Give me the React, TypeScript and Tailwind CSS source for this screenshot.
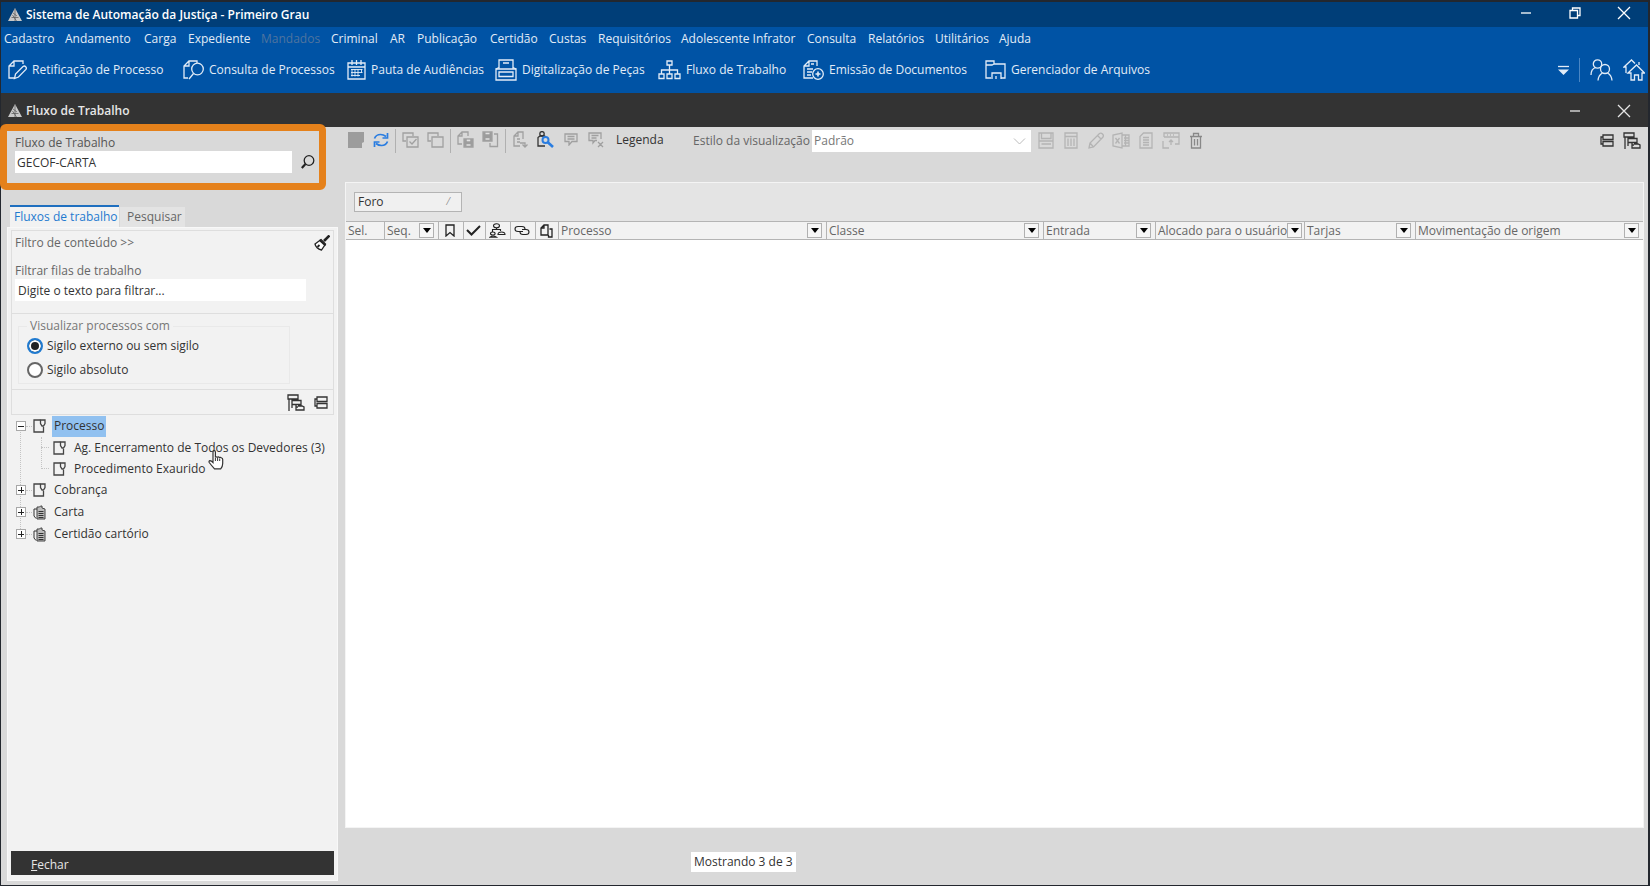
import React from 'react';

// ==========================================
// --- DATA ---
// ==========================================
const menuItems = [
    "Cadastro", "Andamento", "Carga", "Expediente", "Mandados", "Criminal", "AR", "Publicação", "Certidão",
    "Custas", "Requisitórios", "Adolescente Infrator", "Consulta", "Relatórios", "Utilitários", "Ajuda"
];

const shortcuts = [
    { icon: "edit", label: "Retificação de Processo" },
    { icon: "search", label: "Consulta de Processos" },
    { icon: "calendar", label: "Pauta de Audiências" },
    { icon: "scanner", label: "Digitalização de Peças" },
    { icon: "flow", label: "Fluxo de Trabalho" },
    { icon: "emit", label: "Emissão de Documentos" },
    { icon: "files", label: "Gerenciador de Arquivos" }
];

const toolGroups = [
    [{ icon: "sheet", label: "Novo" }, { icon: "refresh", label: "Atualizar" }],
    [{ icon: "selectAll", label: "Selecionar todos" }, { icon: "selectNone", label: "Desmarcar todos" }],
    [{ icon: "docSave", label: "Salvar documento" }, { icon: "saveDoc", label: "Exportar documento" }],
    [
        { icon: "docMove", label: "Movimentar" },
        { icon: "lookup", label: "Localizar" },
        { icon: "note", label: "Observação" },
        { icon: "noteDelete", label: "Remover observação" }
    ]
];

const styleTools = [
    { icon: "floppy", label: "Salvar estilo" },
    { icon: "bin", label: "Excluir estilo" },
    { icon: "pencil", label: "Editar estilo" },
    { icon: "excel", label: "Exportar planilha" },
    { icon: "report", label: "Relatório" },
    { icon: "columns", label: "Colunas" },
    { icon: "trash", label: "Limpar" }
];

const columns = [
    { label: "Sel.", width: "w-[38px]" },
    { label: "Seq.", width: "w-[54px]", filter: true },
    { icon: "bookmark", label: "Marcador", width: "w-[25px]" },
    { icon: "check", label: "Concluído", width: "w-[22px]" },
    { icon: "people", label: "Partes", width: "w-[25px]" },
    { icon: "link", label: "Vínculos", width: "w-[25px]" },
    { icon: "pages", label: "Documentos", width: "w-[23px]" },
    { label: "Processo", width: "w-[268px]", filter: true },
    { label: "Classe", width: "w-[217px]", filter: true },
    { label: "Entrada", width: "w-[112px]", filter: true },
    { label: "Alocado para o usuário", width: "w-[149px]", filter: true },
    { label: "Tarjas", width: "w-[111px]", filter: true },
    { label: "Movimentação de origem", width: "", filter: true }
];

const tree = [
    {
        label: "Processo", icon: "folder", open: true, selected: true,
        children: ["Ag. Encerramento de Todos os Devedores (3)", "Procedimento Exaurido"]
    },
    { label: "Cobrança", icon: "folder" },
    { label: "Carta", icon: "stack" },
    { label: "Certidão cartório", icon: "stack" }
];

// ==========================================
// --- ICONS ---
// ==========================================
function Svg({ w, h, children, className = "" }: any) {
    return (
        <svg
            width={w}
            height={h}
            viewBox={`0 0 ${w} ${h}`}
            fill="none"
            stroke="currentColor"
            strokeWidth={1.3}
            aria-hidden="true"
            className={`shrink-0 ${className}`}
        >
            {children}
        </svg>
    );
}

function Icon({ name }: { name: string }) {
    switch (name) {
        case "logo":
            return (
                <Svg w={14} h={14}>
                    <path d="M7 0L14 13H0z" fill="#c8c8c8" stroke="none" />
                    <path d="M7 1v12M5 5l4 3M3.500 9.500h7M4.500 7l4 6" stroke="#555" strokeWidth={0.7} />
                </Svg>
            );
        case "edit":
            return (
                <Svg w={19} h={20}>
                    <path d="M15 4V1H6L1 6v12h5M1 6h5V1" />
                    <path d="M6.500 18.500l1-4.500L15 6.500q1.500-1 2.700.2t.2 2.700L10.500 17z" />
                </Svg>
            );
        case "search":
            return (
                <Svg w={21} h={20}>
                    <path d="M10 1H6L1 6v12h4M1 6h5V1M10 1h4v2" />
                    <circle cx="14.500" cy="9" r="5.800" />
                    <path d="M10.500 13.500L6 19" />
                </Svg>
            );
        case "calendar":
            return (
                <Svg w={19} h={20}>
                    <path d="M1 3h17v16H1zM1 7h17M5 0v5M9.500 0v5M14 0v5" />
                    <path d="M4 9.500h11.500M4 12.500h11.500M4 15.500h9M5 9v7.500M8 9v7.500M11 9v7.500M14.500 9v4" strokeWidth={0.9} />
                </Svg>
            );
        case "scanner":
            return (
                <Svg w={22} h={22}>
                    <path d="M4 10V1h14v9M1 10h20v11H1zM8 4h6" />
                    <path d="M1 10l3-1.500M21 10l-3-1.500M4 13v4.500h14V13z" />
                </Svg>
            );
        case "flow":
            return (
                <Svg w={23} h={20}>
                    <path d="M9 1h5v4H9zM11.500 5v9M3.500 14v-4h16v4M1 14h5v4.500H1zM9 14h5v4.500H9zM17 14h5v4.500h-5z" />
                </Svg>
            );
        case "emit":
            return (
                <Svg w={21} h={20}>
                    <path d="M14 6V1H6L1 6v12h9M1 6h5V1M4 9h6M4 12h5M4 15h4M8 4h3" />
                    <circle cx="15" cy="14" r="5.300" />
                    <path d="M15 11.500v5M12.500 14h5" strokeWidth={1.600} />
                </Svg>
            );
        case "files":
            return (
                <Svg w={21} h={20}>
                    <path d="M6 18H1V1h8v3h11v14h-4M1 5h6l2-1M7 19v-6h9v6M11 19v-3" />
                </Svg>
            );
        case "users":
            return (
                <Svg w={23} h={22}>
                    <circle cx="7.500" cy="5" r="4.200" />
                    <path d="M1 16q0-6 4.500-7.500" />
                    <circle cx="15" cy="10" r="4.500" />
                    <path d="M8 21.500q.5-5.500 4.500-7.500M22 21.500q-.5-5.500-4.500-7.500" />
                </Svg>
            );
        case "home":
            return (
                <Svg w={22} h={22}>
                    <path d="M3 14V8H1l7.500-7L12 4.500M16 6V3" />
                    <path d="M5 14l8.500-8 8 8h-2.500v7h-3.500v-5h-4v5H8v-7z" />
                </Svg>
            );
        case "magnifier":
            return (
                <Svg w={14} h={14}>
                    <circle cx="8" cy="5.500" r="4.800" />
                    <path d="M4.500 9L.8 13" strokeWidth={2.200} />
                </Svg>
            );
        case "brush":
            return (
                <Svg w={16} h={16}>
                    <path d="M15.500.5L10 6" strokeWidth={2.600} />
                    <path d="M7 4.500l4.500 4.500L7.500 15Q2 13.500 1 9z" fill="#fff" />
                    <path d="M5.500 5l6 5.500M3.500 12l2-2" strokeWidth={1.800} />
                </Svg>
            );
        case "expand":
            return (
                <Svg w={18} h={17}>
                    <path d="M1 1h10v4H1zM2 5v12M5 5v9M5 6.500h9v4H5zM9 10.500v4M11 12h4l2 1v3H9v-3h2" />
                </Svg>
            );
        case "collapse":
            return (
                <Svg w={14} h={13}>
                    <path d="M3 1h10v4.500H3zM3 7.500h10V12H3zM3 3H1v7h2" />
                </Svg>
            );
        case "folder":
            return (
                <Svg w={13} h={14}>
                    <path d="M7.500 1H1v12h9.500V8" />
                    <path d="M7.500 1H12v3.500L10.500 7H9L7.500 4.500z" fill="#f2f2f2" />
                </Svg>
            );
        case "stack":
            return (
                <Svg w={13} h={15}>
                    <path d="M4 4V2h2.500l1-1H9v2l3 1v10H4z" fill="#bbb" strokeWidth={1} />
                    <path d="M4 4H1v7l2 2.500M5.500 6.500h5M5.500 8.500h5M5.500 10.500h5M5.500 12.500h5" stroke="#333" strokeWidth={1} />
                </Svg>
            );
        case "sheet":
            return (
                <Svg w={16} h={18}>
                    <path d="M0 1h16v10l-2 1v5H0z" fill="#9c9c9c" stroke="none" />
                </Svg>
            );
        case "refresh":
            return (
                <Svg w={16} h={16} className="text-[#2a7de1]">
                    <path d="M1.500 6.500Q3 2.500 7.500 2.500q3 0 5.500 2M14.500 1v5h-5M14.500 9.500q-1.500 4-6 4-3 0-5.500-2M1.500 15v-5h5" strokeWidth={1.700} />
                </Svg>
            );
        case "selectAll":
            return (
                <Svg w={17} h={16}>
                    <path d="M4 9H1V1h10v3M5 5h11v10H5z" />
                    <path d="M7.500 9.500l2.500 2.500 4.500-5" />
                </Svg>
            );
        case "selectNone":
            return (
                <Svg w={17} h={16}>
                    <path d="M4 9H1V1h10v3M5 5h11v10H5z" />
                </Svg>
            );
        case "docSave":
            return (
                <Svg w={17} h={17}>
                    <path d="M11 5V1H5L1 5v8h4M1 5h4V1" />
                    <path d="M7 8h9v8H7zM9 8v2.500h5V8M9 16v-2.500h5V16" fill="#9c9c9c" />
                    <path d="M9.500 14h4M10 9.500h3" stroke="#e0e0e0" />
                </Svg>
            );
        case "saveDoc":
            return (
                <Svg w={17} h={17}>
                    <path d="M1 1h9v9H1z" fill="#9c9c9c" />
                    <path d="M3.500 2.500h4M3.500 8h4" stroke="#e0e0e0" />
                    <path d="M12 3h3.500v12.500H8V12" />
                </Svg>
            );
        case "docMove":
            return (
                <Svg w={15} h={17}>
                    <path d="M10 8V1H5L1 5v10h6M1 5h4V1M4 8h3M4 11h3M7 12h5v3M9.500 13.500l2.500 2.500 2.500-2.500" />
                </Svg>
            );
        case "lookup":
            return (
                <Svg w={17} h={17}>
                    <path d="M8 15H1V6.500L3 5h4.500L9 6" stroke="#333" />
                    <circle cx="5" cy="2.800" r="2.200" stroke="#333" />
                    <circle cx="8.500" cy="9" r="3" stroke="#2a7de1" fill="#d9d9d9" strokeWidth={2} />
                    <path d="M10.500 11l5.500 5" stroke="#2a7de1" strokeWidth={2.600} />
                </Svg>
            );
        case "note":
            return (
                <Svg w={14} h={13}>
                    <path d="M1 1h12v7.500H8L5 12V8.500H1zM3.500 3.500h7M3.500 6h7" />
                </Svg>
            );
        case "noteDelete":
            return (
                <Svg w={16} h={16}>
                    <path d="M9 8.500H7L5 11V8.500H1V1h12v6M3.500 3.500h7M3.500 6h5M10 10l5 5M15 10l-5 5" />
                </Svg>
            );
        case "floppy":
            return (
                <Svg w={16} h={17}>
                    <path d="M1 1h14v15H1zM3.500 1v5.500h9.500V1M1 9h14M3.500 12h9.500" />
                </Svg>
            );
        case "bin":
            return (
                <Svg w={14} h={17}>
                    <path d="M1 1h12v15H1zM1 4.500h12M4 6.500V14M7 6.500V14M10 6.500V14" />
                </Svg>
            );
        case "pencil":
            return (
                <Svg w={16} h={17}>
                    <path d="M1 16l1-5L11.500 1.500q1.500-1 3 .5t.5 3L5.500 15zM9.500 3.500L13 7M2 11l3.500 4" />
                </Svg>
            );
        case "excel":
            return (
                <Svg w={18} h={17}>
                    <path d="M10 1v15L1 14V3zM10 3h7v11h-7M12 6h5M12 8.500h5M12 11h5M13.500 3v11M3.500 6l4 5.500M7.500 6l-4 5.500" />
                </Svg>
            );
        case "report":
            return (
                <Svg w={14} h={17}>
                    <path d="M4.500 1H13v15H1V4.500zM4 5.500h6M4 8h6M4 10.500h6M4 13h6" />
                </Svg>
            );
        case "columns":
            return (
                <Svg w={18} h={17}>
                    <path d="M2 5V1h15v11h-4M2 5h15M1 9v7h6M5 3h1M8 3h1M11 3h1M9 13V8M7 10l2-2 2 2" />
                </Svg>
            );
        case "trash":
            return (
                <Svg w={14} h={17} className="text-[#888]">
                    <path d="M1 4.500h12M4.500 4.500V1.500h5v3M2.500 4.500V16h9V4.500M5.500 7v6.500M8.500 7v6.500" />
                </Svg>
            );
        case "bookmark":
            return (
                <Svg w={10} h={13}>
                    <path d="M1 1h8v11L5 8.500 1 12z" />
                </Svg>
            );
        case "check":
            return (
                <Svg w={15} h={11}>
                    <path d="M1 5l4.500 4.500L14 1" strokeWidth={2} />
                </Svg>
            );
        case "people":
            return (
                <Svg w={17} h={15}>
                    <ellipse cx="7.500" cy="2.800" rx="3" ry="2" strokeWidth={1.100} />
                    <path d="M7.500 5v1.500M3.500 9V6.500h8V8" strokeWidth={1.100} />
                    <ellipse cx="3.800" cy="10.500" rx="2.300" ry="1.500" strokeWidth={1.100} />
                    <path d="M1 14.200q3-2.500 6.500 0zM9 11.500q0-2.500 3.500-2.500t3.500 2.500z" strokeWidth={1.100} />
                </Svg>
            );
        case "link":
            return (
                <Svg w={16} h={11}>
                    <path d="M9 6.500H4Q1 6.500 1 4t3-2.500h4q3 0 3 2.500M8 4.500h4q3 0 3 2.500t-3 2.500H9Q6 9.500 6 7" strokeWidth={1.100} />
                </Svg>
            );
        case "pages":
            return (
                <Svg w={13} h={14}>
                    <path d="M4 1h4v10H1V4zM1 4h3V1M9.500 5H12v8H8.500v-2" />
                </Svg>
            );
        case "minimize":
            return (
                <Svg w={12} h={12}>
                    <path d="M1 6h10" />
                </Svg>
            );
        case "restore":
            return (
                <Svg w={12} h={12}>
                    <path d="M1 3.500h7.500V11H1zM3.500 3.500V1H11v7.500H8.500" />
                </Svg>
            );
        case "close":
            return (
                <Svg w={14} h={14}>
                    <path d="M1 1l12 12M13 1L1 13" />
                </Svg>
            );
        case "more":
            return (
                <Svg w={11} h={10}>
                    <path d="M0 1.500h11" />
                    <path d="M0 4.500h11L5.500 10z" fill="currentColor" stroke="none" />
                </Svg>
            );
        default:
            return null;
    }
}

function IconButton({ icon, label, className = "" }: any) {
    return (
        <button aria-label={label} className={`flex h-6 w-[25px] shrink-0 items-center justify-center ${className}`}>
            <Icon name={icon} />
        </button>
    );
}

// ==========================================
// --- TOP BARS ---
// ==========================================
function TopBars() {
    return (
        <header>
            <div className="flex h-[25px] items-center bg-[#003e78] pl-[7px] text-white">
                <Icon name="logo" />
                <h1 className="ml-1 flex-1 text-xs font-semibold">Sistema de Automação da Justiça - Primeiro Grau</h1>
                <button aria-label="Minimizar" className="flex w-[49px] justify-center pb-1"><Icon name="minimize" /></button>
                <button aria-label="Restaurar" className="flex w-[49px] justify-center pb-1"><Icon name="restore" /></button>
                <button aria-label="Fechar janela" className="flex w-[49px] justify-center pb-1"><Icon name="close" /></button>
            </div>

            <div className="bg-[#0053a5] text-[#e2ecf7]">
                <nav className="grid h-[23px] grid-cols-[61px_79px_44px_73px_70px_59px_27px_73px_59px_49px_83px_126px_61px_67px_64px_auto] items-center pl-[3px]">
                    {menuItems.map((item) => (
                        <button
                            key={item}
                            disabled={item === "Mandados"}
                            className="text-left whitespace-nowrap disabled:text-[#4f749f]"
                        >
                            {item}
                        </button>
                    ))}
                </nav>

                <div className="flex h-[43px] items-center justify-between pr-[3px] pb-[3px] pl-[7px]">
                    <div className="grid grid-cols-[175px_164px_148px_163px_145px_182px_auto]">
                        {shortcuts.map((s) => (
                            <button key={s.label} className="flex items-center gap-[5px] whitespace-nowrap">
                                <Icon name={s.icon} />
                                {s.label}
                            </button>
                        ))}
                    </div>
                    <div className="flex items-center gap-[10px]">
                        <button aria-label="Mais opções"><Icon name="more" /></button>
                        <span className="h-6 w-px bg-[#4a86c4]"></span>
                        <button aria-label="Usuários"><Icon name="users" /></button>
                        <button aria-label="Início"><Icon name="home" /></button>
                    </div>
                </div>
            </div>

            <div className="flex h-[34px] items-center bg-[#333] pt-[2px] pl-[7px] text-[#e6e6e6]">
                <Icon name="logo" />
                <h2 className="ml-1 flex-1 font-semibold">Fluxo de Trabalho</h2>
                <button aria-label="Minimizar painel" className="flex w-[49px] justify-center"><Icon name="minimize" /></button>
                <button aria-label="Fechar painel" className="flex w-[49px] justify-center"><Icon name="close" /></button>
            </div>
        </header>
    );
}

// ==========================================
// --- LEFT PANEL ---
// ==========================================
function TreeView() {
    return (
        <div className="relative pl-[5px]">
            {/* Trunk line behind the expanders */}
            <span className="absolute top-3 left-[9px] h-[108px] border-l border-dotted border-[#c4c4c4]"></span>
            <ul>
                {tree.map((node) => (
                    <li key={node.label}>
                        <div className="flex h-[22px] items-center">
                            <button
                                aria-label={node.open ? `Recolher ${node.label}` : `Expandir ${node.label}`}
                                className="relative flex size-[10px] items-center justify-center border border-[#a8a8a8] bg-white"
                            >
                                <svg width="6" height="6" viewBox="0 0 6 6" stroke="#222" strokeWidth="1" aria-hidden="true">
                                    <path d={node.open ? "M0 3.500h6" : "M0 3.500h6M3.500 0v6"} />
                                </svg>
                            </button>
                            <span className="w-[6px] border-t border-dotted border-[#c4c4c4]"></span>
                            <span className="ml-px flex w-[19px] text-[#444]"><Icon name={node.icon} /></span>
                            <button className={`h-[21px] px-[2px] whitespace-nowrap ${node.selected ? "bg-[#91c1f0]" : ""}`}>
                                {node.label}
                            </button>
                        </div>
                        {node.children && (
                            <ul className="relative ml-[25px]">
                                <li role="presentation" className="absolute top-0 left-0 h-8 border-l border-dotted border-[#c4c4c4]"></li>
                                {node.children.map((child) => (
                                    <li key={child} className="flex h-[21px] items-center">
                                        <span className="w-2 border-t border-dotted border-[#c4c4c4]"></span>
                                        <span className="ml-1 flex w-[18px] text-[#444]"><Icon name="folder" /></span>
                                        <button className="px-[3px] whitespace-nowrap">{child}</button>
                                    </li>
                                ))}
                            </ul>
                        )}
                    </li>
                ))}
            </ul>

            {/* Hand pointer resting on the first queue */}
            <svg className="absolute top-[35px] left-[197px]" width="16" height="20" viewBox="0 0 16 20" aria-hidden="true">
                <path
                    d="M5 12V2q0-1.300 1.200-1.300T7.400 2v5.500q.6-1.200 2-.2.800-.9 2.100.3 1.200-.7 2 .4 1.200 0 1.200 1.500v4q0 3-2 5.300H6.500Q3.500 15.500 1.200 12.500q-.6-1.500.8-1.800 1.400 0 3 1.800z"
                    fill="#fff"
                    stroke="#333"
                    strokeWidth="1.200"
                />
                <path d="M7.400 8v3M9.600 8v3M11.700 8.500v2.500" stroke="#333" />
            </svg>
        </div>
    );
}

function SidePanel() {
    return (
        <aside className="relative flex w-[337px] shrink-0 flex-col pb-1 pl-[6px]">
            {/* Highlighted workflow search */}
            <div className="pt-2 pl-2">
                <label htmlFor="workflow" className="block leading-4 text-[#555]">Fluxo de Trabalho</label>
                <div className="flex items-center">
                    <input id="workflow" defaultValue="GECOF-CARTA" className="h-[22px] w-[277px] bg-white px-[2px] text-[#333] outline-none" />
                    <button aria-label="Pesquisar fluxo" className="ml-[9px] text-[#222]"><Icon name="magnifier" /></button>
                </div>
            </div>
            <div className="pointer-events-none absolute -top-[3px] -left-px h-[66px] w-[326px] rounded-md border-[7px] border-[#e5811b]"></div>

            {/* Tabs */}
            <div className="mt-8 flex items-end pl-[3px]">
                <button className="h-[22px] w-[109px] border-t-2 border-[#1f6fbf] bg-[#f2f2f2] pl-1 text-left whitespace-nowrap text-[#1f7ad0]">
                    Fluxos de trabalho
                </button>
                <button className="ml-px h-5 w-[65px] bg-[#e3e3e3] pl-[7px] text-left whitespace-nowrap text-[#666]">Pesquisar</button>
            </div>

            <div className="flex flex-1 flex-col border border-[#f8f8f8] bg-[#f2f2f2] px-[3px] pt-[2px] pb-[5px]">
                <section className="h-[84px] border border-[#dedede] px-[3px]">
                    <div className="flex h-6 items-center justify-between text-[#666]">
                        <button>Filtro de conteúdo &gt;&gt;</button>
                        <button aria-label="Limpar filtros" className="text-[#222]"><Icon name="brush" /></button>
                    </div>
                    <label htmlFor="queue" className="mt-2 block leading-4 text-[#666]">Filtrar filas de trabalho</label>
                    <input
                        id="queue"
                        placeholder="Digite o texto para filtrar..."
                        className="h-[22px] w-[291px] bg-white px-[3px] outline-none placeholder:text-[#333]"
                    />
                </section>

                <section className="h-[76px] border-x border-b border-[#dedede] px-[6px] pt-1">
                    <fieldset className="h-[66px] w-[272px] border border-[#e9e9e9] px-2">
                        <legend className="px-[3px] leading-4 text-[#777]">Visualizar processos com</legend>
                        <label className="flex h-6 items-center gap-1 whitespace-nowrap">
                            <input
                                type="radio"
                                name="sigilo"
                                defaultChecked
                                className="size-4 appearance-none rounded-full border-2 border-[#666] bg-white checked:border-[#1f7ad0] checked:bg-[#222] checked:shadow-[inset_0_0_0_2px_white]"
                            />
                            Sigilo externo ou sem sigilo
                        </label>
                        <label className="flex h-[23px] items-center gap-1 whitespace-nowrap">
                            <input
                                type="radio"
                                name="sigilo"
                                className="size-4 appearance-none rounded-full border-2 border-[#666] bg-white checked:border-[#1f7ad0] checked:bg-[#222] checked:shadow-[inset_0_0_0_2px_white]"
                            />
                            Sigilo absoluto
                        </label>
                    </fieldset>
                </section>

                <div className="flex h-[25px] items-center justify-end border-x border-b border-[#dedede] text-[#333]">
                    <IconButton icon="expand" label="Expandir tudo" />
                    <IconButton icon="collapse" label="Recolher tudo" />
                </div>

                <TreeView />

                <button className="mt-auto h-[24px] bg-[#333] pt-[3px] pl-5 text-left text-[#e6e6e6]">
                    <span className="underline">F</span>echar
                </button>
            </div>
        </aside>
    );
}

// ==========================================
// --- MAIN AREA ---
// ==========================================
function Toolbar() {
    return (
        <div className="flex h-[27px] items-center whitespace-nowrap">
            {toolGroups.map((group, i) => (
                <React.Fragment key={i}>
                    {i > 0 && <span className="mx-[2px] h-6 w-px shrink-0 bg-[#b0b0b0]"></span>}
                    {group.map((tool) => (
                        <IconButton key={tool.icon} {...tool} className="pb-[2px] text-[#a0a0a0]" />
                    ))}
                </React.Fragment>
            ))}
            <button className="ml-2 w-[77px] shrink-0 pb-[2px] text-left">Legenda</button>
            <label htmlFor="style" className="w-[119px] shrink-0 text-[#666]">Estilo da visualização</label>
            <div className="relative mr-[2px] h-[22px] w-[219px] shrink-0">
                <select id="style" className="h-full w-full appearance-none bg-white px-[2px] text-[#777] outline-none">
                    <option>Padrão</option>
                </select>
                <svg className="pointer-events-none absolute top-2 right-[5px]" width="13" height="7" viewBox="0 0 13 7" fill="none" stroke="#bbb" aria-hidden="true">
                    <path d="M1 .5l5.500 5.500L12 .5" />
                </svg>
            </div>
            {styleTools.map((tool) => (
                <IconButton key={tool.icon} {...tool} className="text-[#b4b4b4]" />
            ))}
            <div className="ml-auto flex text-[#333]">
                <IconButton icon="collapse" label="Recolher grupos" />
                <IconButton icon="expand" label="Expandir grupos" />
            </div>
        </div>
    );
}

function ProcessGrid() {
    return (
        <div className="mt-7 ml-[2px] flex flex-1 flex-col border border-[#f4f4f4] bg-white">
            <div className="flex h-[38px] items-center bg-[#e4e4e4] pl-2">
                <button className="flex h-5 w-[108px] items-center justify-between border border-[#b4b4b4] bg-[#f0f0f0] pr-3 pl-[3px]">
                    Foro
                    <span className="text-[10px] text-[#888]">⁄</span>
                </button>
            </div>
            <table className="w-full table-fixed border-y border-[#b4b4b4] bg-[#f2f2f2] text-[#666]">
                <thead>
                    <tr className="h-[18px]">
                        {columns.map((col, i) => (
                            <th key={col.label} scope="col" className={`p-0 font-normal ${col.width}`}>
                                <div className={`flex h-[17px] items-center justify-between pr-1 pl-[2px] whitespace-nowrap ${i > 0 ? "border-l border-[#b4b4b4]" : ""}`}>
                                    {col.icon ? (
                                        <span role="img" aria-label={col.label} className="flex flex-1 justify-center text-[#222]">
                                            <Icon name={col.icon} />
                                        </span>
                                    ) : (
                                        <span>{col.label}</span>
                                    )}
                                    {col.filter && (
                                        <button aria-label={`Filtrar ${col.label}`} className="flex size-[15px] shrink-0 items-center justify-center border border-[#b0b0b0] bg-[#f6f6f6]">
                                            <svg width="8" height="5" viewBox="0 0 8 5" fill="#000" aria-hidden="true">
                                                <path d="M0 0h8L4 5z" />
                                            </svg>
                                        </button>
                                    )}
                                </div>
                            </th>
                        ))}
                    </tr>
                </thead>
            </table>
        </div>
    );
}

export default function App() {
    return (
        <div className="flex min-h-screen flex-col border-t-2 border-r-2 border-b border-l border-[#23272e] bg-[#d9d9d9] font-['Open_Sans',sans-serif] text-xs text-[#333]">
            <TopBars />
            <div className="flex flex-1">
                <SidePanel />
                <main className="flex min-w-0 flex-1 flex-col pr-1 pl-[5px]">
                    <Toolbar />
                    <ProcessGrid />
                    <footer className="flex h-[57px] items-center pt-[10px] pl-[348px]">
                        <span className="bg-white px-[3px] py-px leading-[18px] whitespace-nowrap">Mostrando 3 de 3</span>
                    </footer>
                </main>
            </div>
        </div>
    );
}
